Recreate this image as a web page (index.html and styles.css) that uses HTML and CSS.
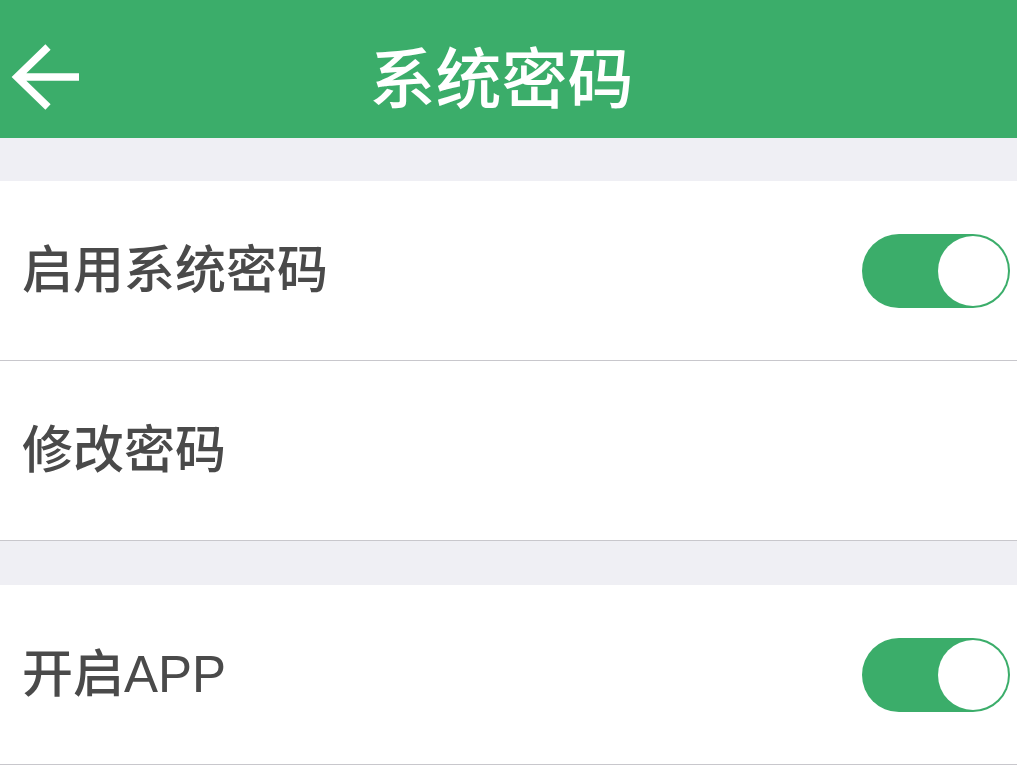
FILE: index.html
```html
<!DOCTYPE html>
<html lang="zh-CN">
<head>
<meta charset="utf-8">
<title>系统密码</title>
<link rel="stylesheet" href="styles.css">
</head>
<body>
<header class="navbar">
  <div class="status"></div>
  <div class="bar">
    <svg class="back" width="70" height="70" viewBox="0 0 70 70">
      <path d="M68 35 H6 M37 5 L6 35 L37 65" fill="none" stroke="#fff" stroke-width="7.5" stroke-linecap="butt" stroke-linejoin="miter"/>
    </svg>
    <h1 class="title">系统密码</h1>
  </div>
</header>
<main>
  <div class="gap"></div>
  <section class="group">
    <div class="row">
      <span class="label">启用系统密码</span>
      <span class="switch on"><span class="knob"></span></span>
    </div>
    <div class="row">
      <span class="label">修改密码</span>
    </div>
  </section>
  <div class="gap gap-lg"></div>
  <section class="group">
    <div class="row">
      <span class="label">开启APP</span>
      <span class="switch on"><span class="knob"></span></span>
    </div>
  </section>
</main>
</body>
</html>
```
FILE: styles.css
```css
html, body {
  margin: 0;
  padding: 0;
  background: #ffffff;
  font-family: "Liberation Sans", "Noto Sans CJK SC", sans-serif;
}
.navbar {
  background: #3bad6a;
  height: 138px;
  display: flex;
  flex-direction: column;
}
.status {
  height: 10px;
}
.bar {
  flex: 1;
  position: relative;
  display: flex;
  align-items: center;
  justify-content: center;
  padding-right: 14px;
}
.back {
  position: absolute;
  left: 11px;
  top: 32px;
}
.title {
  margin: 0;
  color: #ffffff;
  font-size: 66px;
  font-weight: 500;
  line-height: 1;
  font-family: "Noto Sans CJK SC", sans-serif;
}
.gap {
  height: 43px;
  background: #efeff4;
}
.gap-lg {
  height: 44px;
}
.group {
  background: #ffffff;
}
.row {
  height: 179px;
  border-bottom: 1px solid #c8c7cc;
  display: flex;
  align-items: center;
  justify-content: space-between;
  padding: 0 7px 0 22px;
}
.label {
  font-size: 51px;
  font-weight: 500;
  color: #4a4a4a;
  line-height: 1;
}
.switch {
  width: 148px;
  height: 74px;
  border-radius: 37px;
  background: #3bad6a;
  display: flex;
  align-items: center;
  justify-content: flex-end;
  padding: 0 2px;
  box-sizing: border-box;
}
.knob {
  width: 70px;
  height: 70px;
  border-radius: 50%;
  background: #ffffff;
}
```
